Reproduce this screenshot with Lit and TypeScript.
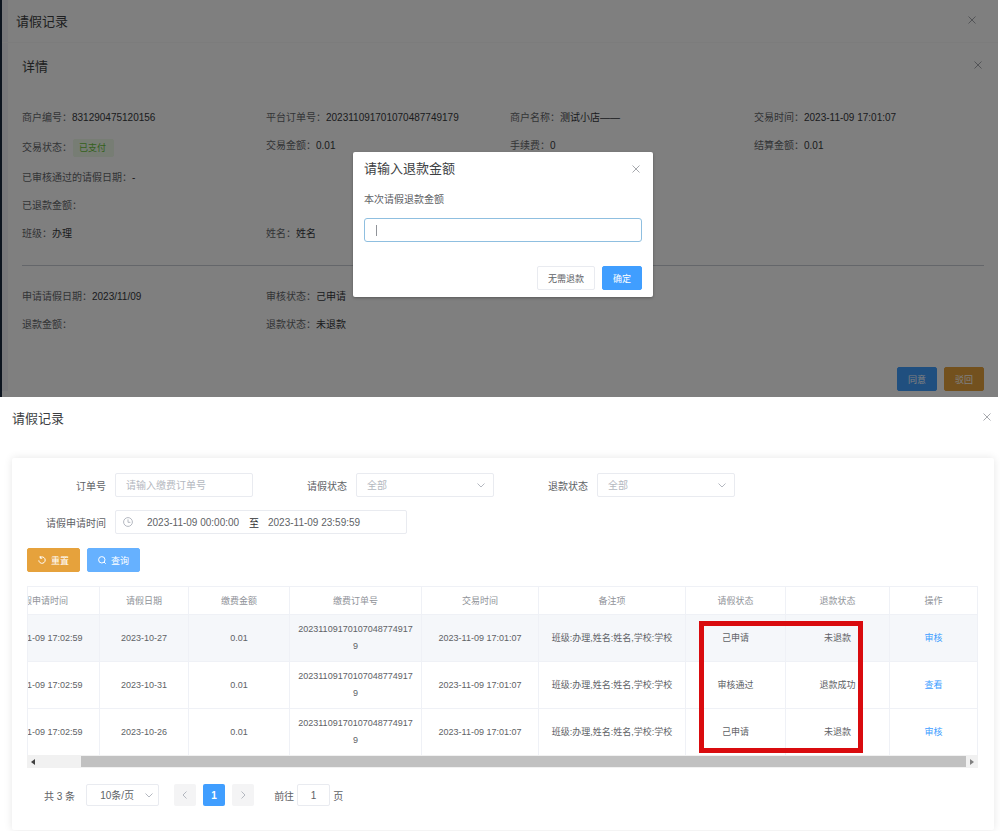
import { LitElement, html, css, svg } from "lit";
import { customElement, property } from "lit/decorators.js";

const font = css`"Liberation Sans", "Noto Sans CJK SC", sans-serif`;

const base = css`
  * {
    box-sizing: border-box;
  }
  :host {
    display: block;
    font-family: ${font};
    font-size: 10px;
    color: #606266;
  }
  button,
  input,
  select {
    font-family: inherit;
    font-size: inherit;
    color: inherit;
    margin: 0;
    padding: 0;
    border: 0;
    background: none;
    outline: none;
  }
  h2 {
    margin: 0;
    font-size: 13px;
    line-height: 20px;
    font-weight: 400;
    color: #3c3e42;
  }
  svg {
    display: block;
    fill: none;
    stroke: currentColor;
  }
  .close {
    width: 12px;
    height: 12px;
    padding: 2px;
    color: #909399;
  }
  .close svg {
    stroke-width: 0.8;
  }
  .btn {
    height: 24px;
    padding: 0 10px;
    border: 1px solid #e9ebf0;
    border-radius: 2px;
    background: #fff;
    font-size: 9px;
    white-space: nowrap;
    display: inline-flex;
    align-items: center;
    justify-content: center;
    gap: 5px;
  }
  .primary {
    background: #409eff;
    border-color: #409eff;
    color: #fff;
  }
  .warning {
    background: #e6a23c;
    border-color: #e6a23c;
    color: #fff;
  }
`;

const closeIcon = html`<svg width="8" height="8" viewBox="0 0 8 8">
  ${svg`<path d="M0.5 0.5 7.5 7.5M7.5 0.5 0.5 7.5"/>`}
</svg>`;

const chevron = html`<svg class="chevron" width="8" height="8" viewBox="0 0 8 8">
  <path d="M0.5 2.5 4 6 7.5 2.5" />
</svg>`;

@customElement("refund-dialog")
class RefundDialog extends LitElement {
  static styles = [
    base,
    css`
      .dialog {
        width: 300px;
        padding: 7px 11px;
        background: #fff;
        border-radius: 2px;
        box-shadow: 0 1px 3px rgba(0, 0, 0, 0.3);
      }
      header {
        display: flex;
        align-items: center;
        justify-content: space-between;
      }
      label {
        display: block;
        margin-top: 12px;
        line-height: 18px;
      }
      .field {
        position: relative;
        margin-top: 9px;
      }
      .field input {
        display: block;
        width: 100%;
        height: 24px;
        padding: 0 11px;
        border: 1px solid #8fbfe0;
        border-radius: 3px;
      }
      .caret {
        position: absolute;
        left: 12px;
        top: 7px;
        width: 1px;
        height: 11px;
        background: #909399;
      }
      footer {
        display: flex;
        justify-content: flex-end;
        gap: 7px;
        margin-top: 24px;
      }
    `,
  ];
  render() {
    return html`<div class="dialog" role="dialog" aria-labelledby="t">
      <header>
        <h2 id="t">请输入退款金额</h2>
        <button class="close" aria-label="关闭">${closeIcon}</button>
      </header>
      <label for="amount">本次请假退款金额</label>
      <div class="field">
        <input id="amount" type="text" />
        <span class="caret"></span>
      </div>
      <footer>
        <button class="btn">无需退款</button>
        <button class="btn primary">确定</button>
      </footer>
    </div>`;
  }
}

interface Field {
  label: string;
  value?: string;
  tag?: boolean;
}

const detailRows: Field[][] = [
  [
    { label: "商户编号", value: "831290475120156" },
    { label: "平台订单号", value: "202311091701070487749179" },
    { label: "商户名称", value: "测试小店——" },
    { label: "交易时间", value: "2023-11-09 17:01:07" },
  ],
  [
    { label: "交易状态", value: "已支付", tag: true },
    { label: "交易金额", value: "0.01" },
    { label: "手续费", value: "0" },
    { label: "结算金额", value: "0.01" },
  ],
  [{ label: "已审核通过的请假日期", value: "-" }],
  [{ label: "已退款金额" }],
  [
    { label: "班级", value: "办理" },
    { label: "姓名", value: "姓名" },
  ],
];

const leaveRows: Field[][] = [
  [
    { label: "申请请假日期", value: "2023/11/09" },
    { label: "审核状态", value: "己申请" },
  ],
  [{ label: "退款金额" }, { label: "退款状态", value: "未退款" }],
];

@customElement("leave-detail")
class LeaveDetail extends LitElement {
  static styles = [
    base,
    css`
      .screen {
        position: relative;
        background: #fff;
        border-left: 2px solid #18283e;
        margin-right: 2px;
        padding-bottom: 6px;
      }
      .bar {
        display: flex;
        justify-content: space-between;
        align-items: flex-start;
      }
      .outer {
        height: 43px;
        padding: 12px 20px 0 14px;
        border-bottom: 1px solid #f8f8f8;
        box-shadow: inset 6px 0 #f3f3f8;
      }
      .outer .close {
        margin-top: 2px;
      }
      .panel {
        padding-left: 20px;
        box-shadow: inset 6px 0 #f3f3f8;
      }
      .inner {
        height: 61px;
        padding: 14px 14px 0 0;
      }
      .inner .close {
        margin-top: 2px;
      }
      .row {
        display: grid;
        grid-template-columns: repeat(4, 1fr);
        line-height: 28px;
        align-items: start;
      }
      .item {
        display: flex;
        color: #66686c;
      }
      .item b {
        font-weight: 400;
        color: #36383c;
      }
      .item .tag {
        margin: 7px 0 7px 1px;
        padding: 0 7px 0 5px;
        line-height: 16px;
        height: 18px;
        font-size: 9px;
        color: #67c23a;
        background: #effae8;
        border: 1px solid #effae8;
        border-radius: 2px;
      }
      .item.tagged {
        line-height: 32px;
      }
      hr {
        height: 1px;
        border: 0;
        background: #c8ccd4;
        margin: 17px 14px 17px 0;
      }
      .actions {
        display: flex;
        justify-content: flex-end;
        gap: 7px;
        padding: 28px 14px 0 0;
      }
      .mask {
        position: absolute;
        inset: 0 0 0 -2px;
        background: rgba(0, 0, 0, 0.5);
        display: flex;
        justify-content: center;
        align-items: flex-start;
        padding: 152px 0 0 8px;
      }
    `,
  ];
  private row(fields: Field[]) {
    return html`<div class="row">
      ${fields.map(
        (f) => html`<div class="item ${f.tag ? "tagged" : ""}">
          <span>${f.label}：</span><b class=${f.tag ? "tag" : ""}>${f.value ?? ""}</b>
        </div>`
      )}
    </div>`;
  }
  render() {
    return html`<section class="screen">
      <div class="bar outer">
        <h2>请假记录</h2>
        <button class="close" aria-label="关闭">${closeIcon}</button>
      </div>
      <div class="panel">
        <div class="bar inner">
          <h2>详情</h2>
          <button class="close" aria-label="关闭">${closeIcon}</button>
        </div>
        ${detailRows.map((r) => this.row(r))}
        <hr />
        ${leaveRows.map((r) => this.row(r))}
        <div class="actions">
          <button class="btn primary">同意</button>
          <button class="btn warning">驳回</button>
        </div>
      </div>
      <div class="mask"><refund-dialog></refund-dialog></div>
    </section>`;
  }
}

const columns = [
  { title: "请假申请时间", width: 117 },
  { title: "请假日期", width: 89 },
  { title: "缴费金额", width: 101 },
  { title: "缴费订单号", width: 132 },
  { title: "交易时间", width: 117 },
  { title: "备注项", width: 147 },
  { title: "请假状态", width: 100 },
  { title: "退款状态", width: 104 },
  { title: "操作", width: 88 },
];

const records = [
  { date: "2023-10-27", state: "己申请", refund: "未退款", action: "审核" },
  { date: "2023-10-31", state: "审核通过", refund: "退款成功", action: "查看" },
  { date: "2023-10-26", state: "己申请", refund: "未退款", action: "审核" },
];

@customElement("record-table")
class RecordTable extends LitElement {
  @property({ attribute: false }) rows = records;
  static styles = [
    base,
    css`
      :host {
        position: relative;
      }
      .view {
        overflow: hidden;
        border-left: 1px solid #eff1f6;
      }
      table {
        width: calc(100% + 45px);
        margin-left: -45px;
        table-layout: fixed;
        border-collapse: separate;
        border-spacing: 0;
        font-size: 9px;
        line-height: 17px;
        text-align: center;
        border-top: 1px solid #eff1f6;
      }
      th,
      td {
        padding: 6px 7px;
        border-right: 1px solid #eff1f6;
        border-bottom: 1px solid #eff1f6;
        font-weight: 400;
        word-break: break-all;
      }
      th {
        padding: 6px 7px 4px;
        color: #909399;
      }
      tr.current td {
        background: #f5f7fa;
      }
      tbody tr:last-child td {
        border-bottom: 0;
      }
      a {
        color: #409eff;
        text-decoration: none;
      }
      .scroll {
        display: flex;
        align-items: center;
        height: 13px;
        background: #f1f1f1;
      }
      .arrow {
        width: 12px;
        height: 12px;
        display: flex;
        align-items: center;
        justify-content: center;
        color: #404040;
      }
      .arrow.end {
        color: #808080;
      }
      .arrow svg {
        fill: currentColor;
        stroke: none;
      }
      .track {
        flex: 1;
        padding-left: 42px;
      }
      .thumb {
        height: 11px;
        background: #c1c1c1;
      }
      .highlight {
        position: absolute;
        top: 35px;
        right: 115px;
        width: 164px;
        height: 132px;
        border: 5px solid #d90b0e;
      }
    `,
  ];
  render() {
    return html`<div class="view">
        <table>
          <colgroup>
            ${columns.map((c) => html`<col style="width:${c.width}px" />`)}
          </colgroup>
          <thead>
            <tr>
              ${columns.map((c) => html`<th scope="col">${c.title}</th>`)}
            </tr>
          </thead>
          <tbody>
            ${this.rows.map(
              (r, i) => html`<tr class=${i === 0 ? "current" : ""}>
                <td>2023-11-09 17:02:59</td>
                <td>${r.date}</td>
                <td>0.01</td>
                <td>202311091701070487749179</td>
                <td>2023-11-09 17:01:07</td>
                <td>班级:办理,姓名:姓名,学校:学校</td>
                <td>${r.state}</td>
                <td>${r.refund}</td>
                <td><a href="#">${r.action}</a></td>
              </tr>`
            )}
          </tbody>
        </table>
      </div>
      <div class="scroll">
        <span class="arrow"><svg width="4" height="6" viewBox="0 0 4 6"><path d="M4 0V6L0 3Z" /></svg></span>
        <div class="track"><div class="thumb"></div></div>
        <span class="arrow end"><svg width="4" height="6" viewBox="0 0 4 6"><path d="M0 0V6L4 3Z" /></svg></span>
      </div>
      <div class="highlight"></div>`;
  }
}

@customElement("leave-records")
class LeaveRecords extends LitElement {
  static styles = [
    base,
    css`
      .top {
        display: flex;
        justify-content: space-between;
        padding: 12px 7px 0 12px;
        height: 61px;
      }
      .top .close {
        margin-top: 2px;
      }
      .card {
        margin: 0 6px 0 12px;
        padding: 15px 16px 24px 15px;
        background: #fff;
        border-radius: 2px;
        box-shadow: 0 0 8px rgba(0, 0, 0, 0.1);
      }
      .filters {
        display: flex;
        flex-wrap: wrap;
        gap: 13px 15px;
      }
      .filter {
        display: flex;
        align-items: center;
      }
      .filter > label {
        width: 88px;
        padding-right: 9px;
        text-align: right;
        font-size: 10px;
      }
      .box {
        display: flex;
        align-items: center;
        position: relative;
        width: 138px;
        height: 24px;
        border: 1px solid #e9ebf0;
        border-radius: 2px;
      }
      .box > input,
      .box > select {
        width: 100%;
        height: 22px;
        padding: 0 10px;
        appearance: none;
      }
      .box > select {
        color: #b4b8c0;
      }
      input::placeholder {
        color: #b4b8c0;
        opacity: 1;
      }
      .chevron {
        position: absolute;
        right: 8px;
        top: 7px;
        color: #b4b8c0;
        pointer-events: none;
      }
      .range {
        width: 292px;
        padding-left: 7px;
      }
      .range > svg {
        flex: none;
        color: #b4b8c0;
      }
      .range > input {
        width: 121px;
        padding: 0 0 0 14px;
      }
      .range > input:last-child {
        padding-left: 9px;
      }
      .range > span {
        flex: none;
        width: 10px;
        margin-left: -9px;
        color: #303133;
      }
      .range > input:first-of-type {
        width: 125px;
      }
      .buttons {
        display: flex;
        gap: 7px;
        margin: 14px 0;
      }
      .search {
        background: #66b1ff;
        border-color: #66b1ff;
      }
      .pager {
        display: flex;
        align-items: center;
        margin: 16px 0 0 17px;
      }
      .pager .box {
        height: 22px;
      }
      .pager .box > select,
      .pager .box > input {
        height: 20px;
        color: #606266;
      }
      .pager .size {
        width: 73px;
        margin: 0 15px 0 11px;
      }
      .pager .size > select {
        padding-left: 13px;
      }
      .size .chevron {
        right: 5px;
        top: 6px;
      }
      .page {
        display: flex;
        align-items: center;
        justify-content: center;
        width: 22px;
        height: 22px;
        margin-right: 7px;
        border-radius: 2px;
        background: #f4f4f5;
        color: #b4b8c0;
      }
      .page.on {
        background: #409eff;
        color: #fff;
        font-weight: 700;
      }
      .jump {
        display: flex;
        align-items: center;
        gap: 3px;
        margin-left: 13px;
      }
      .jump .box {
        width: 33px;
      }
      .pager .jump input {
        padding: 0;
        text-align: center;
      }
    `,
  ];
  private select(id: string, label: string) {
    return html`<div class="filter">
      <label for=${id}>${label}</label>
      <div class="box">
        <select id=${id}>
          <option>全部</option>
        </select>
        ${chevron}
      </div>
    </div>`;
  }
  render() {
    return html`<div class="top">
        <h2>请假记录</h2>
        <button class="close" aria-label="关闭">${closeIcon}</button>
      </div>
      <section class="card">
        <div class="filters">
          <div class="filter">
            <label for="order">订单号</label>
            <div class="box"><input id="order" type="text" placeholder="请输入缴费订单号" /></div>
          </div>
          ${this.select("leave", "请假状态")} ${this.select("refund", "退款状态")}
          <div class="filter">
            <label for="from">请假申请时间</label>
            <div class="box range">
              <svg width="10" height="10" viewBox="0 0 10 10">
                <circle cx="5" cy="5" r="4.4" />
                <path d="M5 2.4V5.3H7.4" />
              </svg>
              <input id="from" type="text" .value=${"2023-11-09 00:00:00"} />
              <span>至</span>
              <input aria-label="结束时间" type="text" .value=${"2023-11-09 23:59:59"} />
            </div>
          </div>
        </div>
        <div class="buttons">
          <button class="btn warning">
            <svg width="8" height="8" viewBox="0 0 8 8">
              <path d="M2 1.6A3.2 3.2 0 1 1 0.8 4.4M2.2 0V2.2H4.2" /></svg
            >重置
          </button>
          <button class="btn primary search">
            <svg width="8" height="8" viewBox="0 0 8 8">
              <circle cx="3.8" cy="3.8" r="3.2" />
              <path d="M6 6 7.7 7.7" /></svg
            >查询
          </button>
        </div>
        <record-table></record-table>
        <nav class="pager" aria-label="分页">
          <span>共 3 条</span>
          <div class="box size">
            <select aria-label="每页条数">
              <option>10条/页</option>
            </select>
            ${chevron}
          </div>
          <button class="page" aria-label="上一页">
            <svg width="8" height="8" viewBox="0 0 8 8"><path d="M5.5 0.5 2 4 5.5 7.5" /></svg>
          </button>
          <button class="page on">1</button>
          <button class="page" aria-label="下一页">
            <svg width="8" height="8" viewBox="0 0 8 8"><path d="M2.5 0.5 6 4 2.5 7.5" /></svg>
          </button>
          <div class="jump">
            <label for="page">前往</label>
            <div class="box"><input id="page" type="text" .value=${"1"} /></div>
            <span>页</span>
          </div>
        </nav>
      </section>`;
  }
}

@customElement("app-root")
class AppRoot extends LitElement {
  static styles = css`
    :host {
      display: block;
      background: #fff;
      overflow: hidden;
      padding-bottom: 1px;
    }
  `;
  render() {
    return html`<leave-detail></leave-detail><leave-records></leave-records>`;
  }
}
